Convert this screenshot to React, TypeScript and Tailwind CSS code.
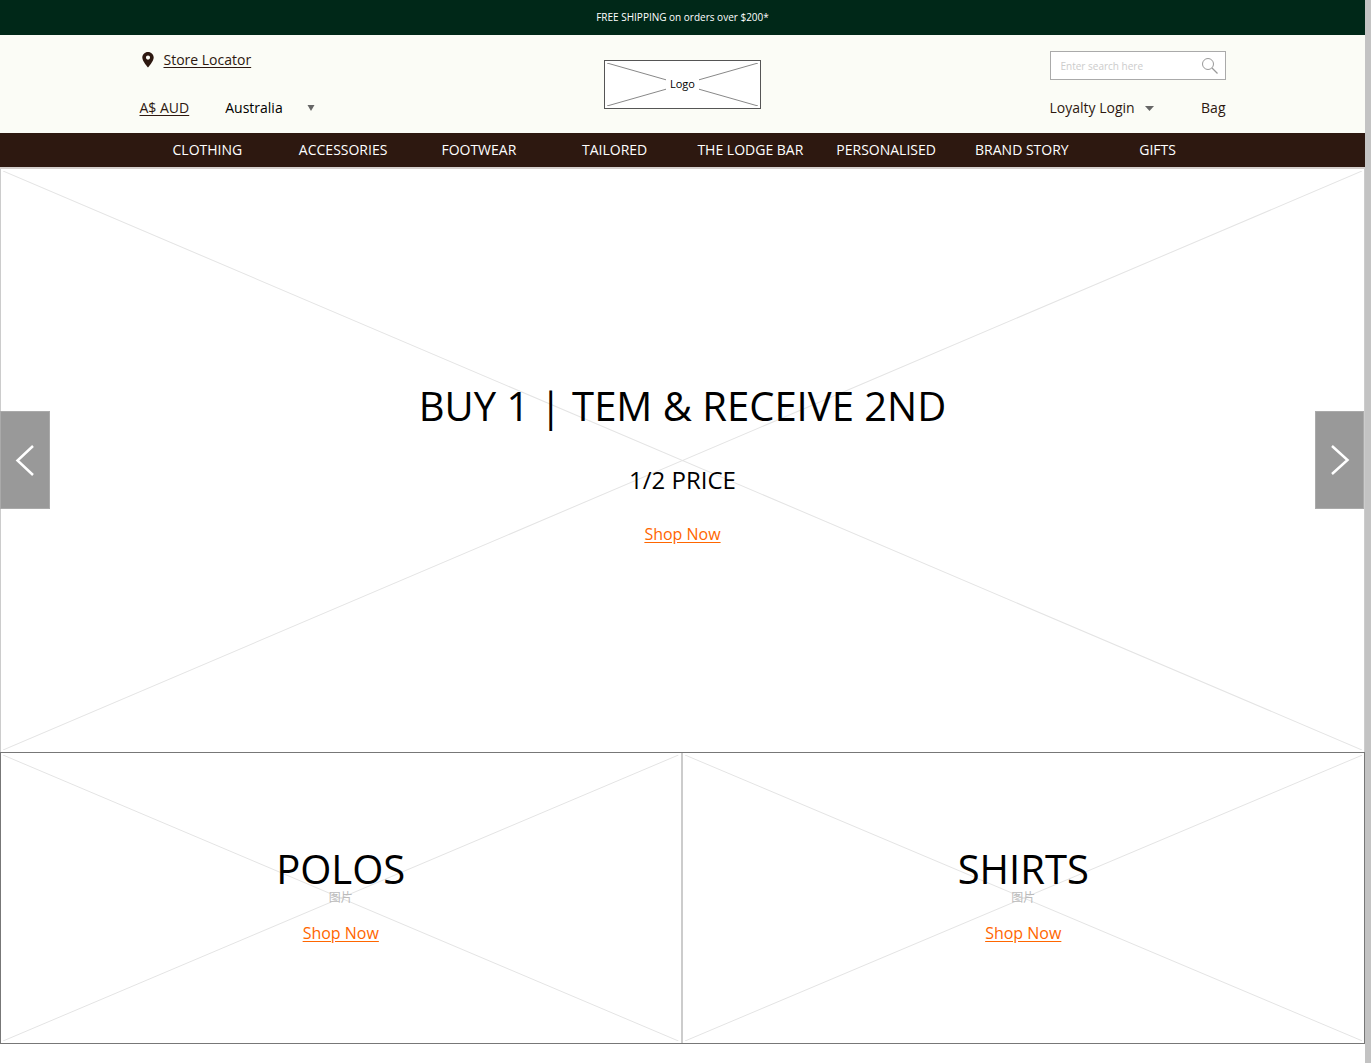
import { useState } from "react"

const categories = [
  "CLOTHING",
  "ACCESSORIES",
  "FOOTWEAR",
  "TAILORED",
  "THE LODGE BAR",
  "PERSONALISED",
  "BRAND STORY",
  "GIFTS",
]

const tiles = ["POLOS", "SHIRTS"]

function Cross({ className }: { className: string }) {
  return (
    <svg
      className={`pointer-events-none absolute inset-0.5 h-[calc(100%-4px)] w-[calc(100%-4px)] ${className}`}
      viewBox="0 0 100 100"
      preserveAspectRatio="none"
      aria-hidden="true"
    >
      <path d="M0 0 100 100M100 0 0 100" fill="none" stroke="currentColor" vectorEffect="non-scaling-stroke" />
    </svg>
  )
}

function ShopNow() {
  return (
    <a href="#" className="relative text-base leading-6 text-[#ff6600] underline underline-offset-2">
      Shop Now
    </a>
  )
}

function Header() {
  const [country, setCountry] = useState("Australia")

  return (
    <header className="bg-[#fbfcf6] py-4">
      <div className="mx-auto flex max-w-[1086px] items-stretch justify-between text-sm leading-[18px] text-[#2d1810]">
        <div className="flex flex-1 flex-col justify-between">
          <a href="#" className="flex items-center gap-2">
            <svg className="h-4 w-4" viewBox="0 0 16 16" aria-hidden="true">
              <path
                fill="currentColor"
                fillRule="evenodd"
                d="M8 0C4.800 0 2.300 2.500 2.300 5.600 2.300 9.500 8 15.500 8 15.500s5.700-6 5.700-9.900C13.700 2.500 11.200 0 8 0Zm0 3.500a2.100 2.100 0 1 1 0 4.200 2.100 2.100 0 0 1 0-4.200Z"
              />
            </svg>
            <span className="underline underline-offset-2">Store Locator</span>
          </a>
          <div className="flex items-center gap-9">
            <a href="#" className="underline underline-offset-2">
              A$ AUD
            </a>
            <div className="relative">
              <select
                aria-label="Country"
                value={country}
                onChange={(e) => setCountry(e.target.value)}
                className="block w-24 appearance-none bg-transparent text-black"
              >
                <option>Australia</option>
                <option>New Zealand</option>
              </select>
              <svg
                className="pointer-events-none absolute top-1.5 right-1.5 h-1.5 w-2 text-[#666]"
                viewBox="0 0 8 6"
                aria-hidden="true"
              >
                <path d="M0.500 0h7L4 6Z" fill="currentColor" />
              </svg>
            </div>
          </div>
        </div>

        <a
          href="#"
          className="relative flex h-[49px] w-[157px] items-center justify-center self-center border border-[#555] bg-white"
        >
          <Cross className="text-[#888]" />
          <span className="relative bg-white px-1 text-[11px] text-black">Logo</span>
        </a>

        <div className="flex flex-1 flex-col items-end justify-between gap-[19px]">
          <form
            className="flex h-[29px] w-44 items-center border border-[#aaa] bg-white pr-1.5 pl-2.5"
            onSubmit={(e) => e.preventDefault()}
          >
            <input
              type="search"
              aria-label="Search"
              placeholder="Enter search here"
              className="w-full min-w-0 text-[10px] outline-none placeholder:text-[#ccc]"
            />
            <button type="submit" aria-label="Submit search" className="shrink-0 text-[#999]">
              <svg className="h-[18px] w-[18px]" viewBox="0 0 18 18" fill="none" stroke="currentColor" aria-hidden="true">
                <circle cx="7" cy="7" r="5.500" />
                <path d="m11 11 5.500 5.500" strokeWidth="1.300" />
              </svg>
            </button>
          </form>
          <div className="flex w-44 items-center justify-between">
            <button type="button" className="flex items-center gap-2.5 whitespace-nowrap">
              Loyalty Login
              <svg className="h-[5px] w-[9px] text-[#666]" viewBox="0 0 9 5" aria-hidden="true">
                <path d="M0 0h9L4.500 5Z" fill="currentColor" />
              </svg>
            </button>
            <a href="#">Bag</a>
          </div>
        </div>
      </div>
    </header>
  )
}

function Hero() {
  return (
    <section className="relative flex flex-col items-center border-x border-[#ccc] pt-[205px] pb-[206px] text-black">
      <Cross className="text-[#e4e4e4]" />
      <h1 className="relative text-[40px] leading-[64px]">BUY 1 | TEM &amp; RECEIVE 2ND</h1>
      <p className="relative my-6 text-2xl leading-9">1/2 PRICE</p>
      <ShopNow />
      <button
        type="button"
        aria-label="Previous slide"
        className="absolute top-[242px] -left-px flex h-[98px] w-[50px] items-center justify-center border border-[#aaa] bg-[#999] text-white"
      >
        <svg className="h-8 w-5" viewBox="0 0 20 32" fill="none" stroke="currentColor" strokeWidth="2.500" aria-hidden="true">
          <path d="M18 2 2.500 16.500 18 31" />
        </svg>
      </button>
      <button
        type="button"
        aria-label="Next slide"
        className="absolute top-[242px] right-0 flex h-[98px] w-[49px] items-center justify-center border border-[#aaa] bg-[#999] text-white"
      >
        <svg className="h-8 w-5" viewBox="0 0 20 32" fill="none" stroke="currentColor" strokeWidth="2.500" aria-hidden="true">
          <path d="M2 2 17.500 16 2 30" />
        </svg>
      </button>
    </section>
  )
}

export default function App() {
  return (
    <div className="border-r-[6px] border-[#c3c3c3] bg-white pb-5 font-['Open_Sans','Noto_Sans_CJK_SC',sans-serif]">
      <p className="bg-[#002818] text-center text-[10px] leading-[35px] text-white">
        FREE SHIPPING on orders over $200*
      </p>
      <Header />
      <nav className="border-b-2 border-[#d5d0ce] bg-[#2d1810]">
        <ul className="mx-auto grid max-w-[1086px] grid-cols-8 text-center text-sm leading-[34px] text-white">
          {categories.map((category) => (
            <li key={category}>
              <a href="#" className="whitespace-nowrap">
                {category}
              </a>
            </li>
          ))}
        </ul>
      </nav>
      <main>
        <Hero />
        <div className="grid grid-cols-2 border border-[#777]">
          {tiles.map((title) => (
            <section
              key={title}
              className="relative flex flex-col items-center border-[#ccc] pt-24 pb-[98px] text-black first:border-r-2"
            >
              <Cross className="text-[#e4e4e4]" />
              <h2 className="relative text-[40px] leading-10">{title}</h2>
              <span className="absolute inset-x-0 top-1/2 -translate-y-1/2 text-center text-xs leading-3 text-[#bbb]">
                图片
              </span>
              <div className="mt-8 flex">
                <ShopNow />
              </div>
            </section>
          ))}
        </div>
      </main>
    </div>
  )
}
